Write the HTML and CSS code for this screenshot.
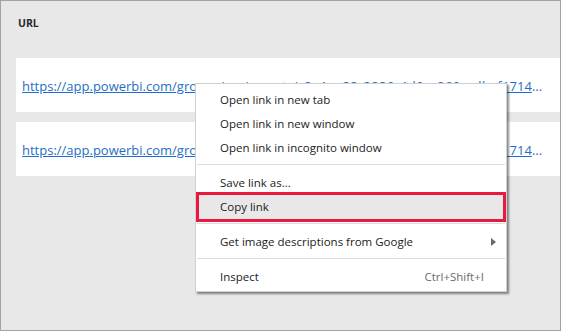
FILE: index.html
```html
<!DOCTYPE html>
<html>
<head>
<meta charset="utf-8">
<link rel="stylesheet" href="styles.css">
</head>
<body>
<div class="frame">
  <div class="header">URL</div>
  <div class="rows">
    <div class="row"><div class="cell"><a href="#">https://app.powerbi.com/groups/me/reports/<span class="mid">c8e1ac23-2230-4d0e-860e-dbcf</span>1714</a><span class="dots">...</span></div></div>
    <div class="row"><div class="cell"><a href="#">https://app.powerbi.com/groups/me/reports/<span class="mid">c8e1ac23-2230-4d0e-860e-dbcf</span>1714</a><span class="dots">...</span></div></div>
  </div>
  <div class="menu">
    <div class="item">Open link in new tab</div>
    <div class="item">Open link in new window</div>
    <div class="item">Open link in incognito window</div>
    <div class="sep"></div>
    <div class="item">Save link as...</div>
    <div class="item active">Copy link</div>
    <div class="sep"></div>
    <div class="item sub"><span>Get image descriptions from Google</span><svg class="arrow" width="5" height="8" viewBox="0 0 5 8"><path d="M0 0 L5 4 L0 8 Z" fill="#6a6a6a"/></svg></div>
    <div class="sep"></div>
    <div class="item"><span>Inspect</span><span class="key">Ctrl+Shift+I</span></div>
  </div>
</div>
</body>
</html>
```
FILE: styles.css
```css
html, body {
  margin: 0;
  padding: 0;
}
body {
  width: 561px;
  height: 331px;
  overflow: hidden;
  font-family: "Open Sans", "Noto Sans", sans-serif;
}
.frame {
  position: relative;
  box-sizing: border-box;
  width: 561px;
  height: 331px;
  border: 1px solid #a3a3a3;
  background: #e8e8e8;
}
.header {
  padding: 16px 0 0 17px;
  height: 41px;
  box-sizing: border-box;
  font-size: 10.5px;
  font-weight: 700;
  color: #2b2b2b;
  line-height: 12px;
}
.rows {
  margin-top: 16px;
  padding-left: 15px;
  display: flex;
  flex-direction: column;
  gap: 10px;
}
.row {
  height: 54px;
  background: #fff;
  display: flex;
  align-items: center;
  padding: 2px 0 0 6px;
  box-sizing: border-box;
}
.cell {
  white-space: nowrap;
  font-size: 13px;
  color: #1f6fc4;
  line-height: 18px;
}
.cell a {
  color: #1f6fc4;
  text-decoration: underline;
}
.mid {
  letter-spacing: 0.55px;
}
.dots {
  color: #1f6fc4;
}
.menu {
  position: absolute;
  left: 194px;
  top: 82px;
  width: 312px;
  box-sizing: border-box;
  background: #fff;
  border: 1px solid #d0d0d0;
  box-shadow: 2px 2px 2px rgba(0, 0, 0, 0.45);
  padding: 4px 0 2px;
  font-size: 11.5px;
  color: #222;
}
.item {
  height: 24px;
  box-sizing: border-box;
  display: flex;
  align-items: center;
  justify-content: space-between;
  padding: 0 22px 0 24px;
  line-height: 16px;
}
.item.active {
  height: 30px;
  margin: -3px 0;
  border: 3px solid #e8193c;
  padding-left: 21px;
  background: #e8e8e8;
  position: relative;
}
.sep {
  height: 1px;
  background: #dcdcdc;
  margin: 4px 1px 6px;
}
.sub {
  padding-right: 10px;
}
.key {
  color: #6b6b6b;
}
```
